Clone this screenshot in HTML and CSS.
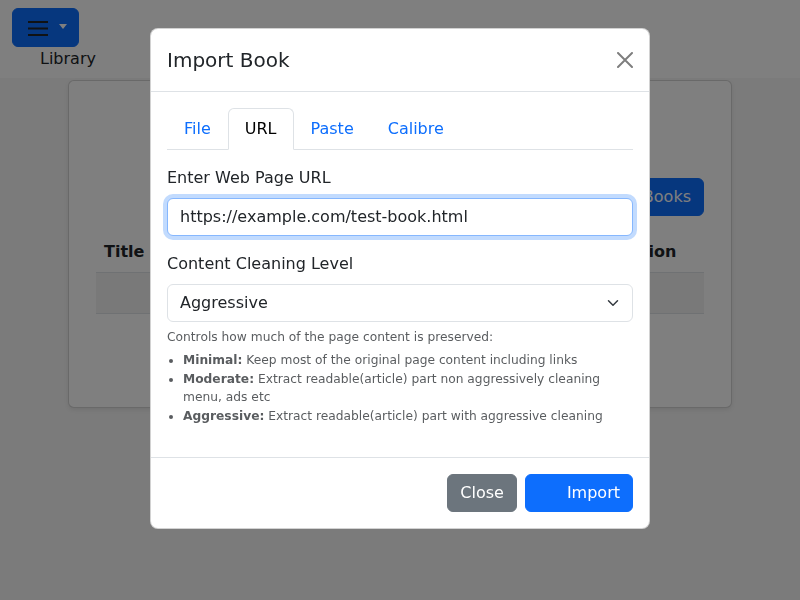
FILE: index.html
```html
<!DOCTYPE html>
<html lang="en">
<head>
<meta charset="utf-8">
<title>Library</title>
<link rel="stylesheet" href="styles.css">
</head>
<body>
<header class="topbar">
  <button class="menu-btn" type="button" aria-label="Menu">
    <svg class="burger" width="20" height="16" viewBox="0 0 20 16" aria-hidden="true">
      <path d="M0 2h20M0 8.5h20M0 15h20" stroke="#212529" stroke-width="2" fill="none"/>
    </svg>
    <span class="caret"></span>
  </button>
  <div class="brand">Library</div>
</header>

<main class="page">
  <section class="card">
    <h3 class="card-title">My Library</h3>
    <div class="toolbar">
      <button class="btn btn-primary" type="button">Import Books</button>
    </div>
    <table class="table">
      <thead>
        <tr><th class="col-title">Title</th><th>Author</th><th>Progress</th><th class="col-action">Action</th></tr>
      </thead>
      <tbody>
        <tr class="striped"><td colspan="4" class="empty">&nbsp;</td></tr>
      </tbody>
    </table>
  </section>
</main>

<div class="backdrop"></div>

<div class="modal">
  <div class="dialog">
    <div class="content">
      <div class="modal-header">
        <h5 class="modal-title">Import Book</h5>
        <button class="btn-close" type="button" aria-label="Close">
          <svg width="16" height="16" viewBox="0 0 16 16" aria-hidden="true">
            <path d="M1 1L15 15M15 1L1 15" stroke="#000" stroke-width="2" stroke-linecap="round" fill="none"/>
          </svg>
        </button>
      </div>
      <div class="modal-body">
        <ul class="nav-tabs">
          <li><a class="nav-link" href="#">File</a></li>
          <li><a class="nav-link active" href="#">URL</a></li>
          <li><a class="nav-link" href="#">Paste</a></li>
          <li><a class="nav-link" href="#">Calibre</a></li>
        </ul>
        <div class="tab-content">
          <div class="group">
            <label class="form-label" for="url">Enter Web Page URL</label>
            <input class="form-control focused" id="url" type="text" value="https://example.com/test-book.html">
          </div>
          <div class="group-last">
            <label class="form-label" for="lvl">Content Cleaning Level</label>
            <div class="select-wrap">
              <select class="form-select" id="lvl">
                <option>Minimal</option>
                <option>Moderate</option>
                <option selected>Aggressive</option>
              </select>
              <svg class="chevron" width="16" height="12" viewBox="0 0 16 16" aria-hidden="true">
                <path d="M2 5l6 6 6-6" stroke="#343a40" stroke-width="2" stroke-linecap="round" stroke-linejoin="round" fill="none"/>
              </svg>
            </div>
            <div class="form-text">
              <p class="hint">Controls how much of the page content is preserved:</p>
              <ul class="levels">
                <li><strong>Minimal:</strong> Keep most of the original page content including links</li>
                <li><strong>Moderate:</strong> Extract readable(article) part non aggressively cleaning menu, ads etc</li>
                <li><strong>Aggressive:</strong> Extract readable(article) part with aggressive cleaning</li>
              </ul>
            </div>
          </div>
        </div>
      </div>
      <div class="modal-footer">
        <button class="btn btn-secondary" type="button">Close</button>
        <button class="btn btn-primary btn-import" type="button"><span class="btn-icon"></span>Import</button>
      </div>
    </div>
  </div>
</div>
</body>
</html>
```

FILE: styles.css
```css
* { box-sizing: border-box; }

html, body {
  margin: 0;
  padding: 0;
}

body {
  font-family: "DejaVu Sans", sans-serif;
  font-size: 16px;
  line-height: 1.5;
  color: #212529;
  background: #f6f6f6;
  height: 600px;
  overflow: hidden;
}

.topbar {
  background: #fff;
  height: 78px;
  padding: 8px 12px 0;
}

.menu-btn {
  display: flex;
  align-items: center;
  width: 67px;
  height: 39px;
  padding: 0 0 0 15px;
  background: #0d6efd;
  border: 1px solid #0d6efd;
  border-radius: 6px;
}

.burger { display: block; }

.caret {
  display: inline-block;
  margin-left: 11px;
  margin-top: -2px;
  border-top: 5px solid #fff;
  border-left: 4px solid transparent;
  border-right: 4px solid transparent;
}

.brand {
  margin-left: 28px;
  line-height: 24px;
}

.page {
  padding: 2px 68px 0;
}

.card {
  background: #fff;
  border: 1px solid rgba(0, 0, 0, 0.175);
  border-radius: 6px;
  box-shadow: 0 2px 4px rgba(0, 0, 0, 0.08);
  padding: 28px 27px 28px;
  height: 328px;
}

.card-title {
  margin: 0 0 35px;
  font-size: 28px;
  line-height: 34px;
  font-weight: 500;
  text-align: center;
}

.toolbar {
  display: flex;
  justify-content: flex-end;
  margin-bottom: 16px;
}

.btn {
  font-family: inherit;
  font-size: 16px;
  line-height: 24px;
  padding: 6px 12px;
  border: 1px solid transparent;
  border-radius: 6px;
  color: #fff;
}

.btn-primary {
  background: #0d6efd;
  border-color: #0d6efd;
}

.btn-secondary {
  background: #6c757d;
  border-color: #6c757d;
}

.table {
  width: 100%;
  border-collapse: collapse;
  table-layout: fixed;
}

.table th,
.table td {
  padding: 8px;
  text-align: left;
  border-bottom: 1px solid #dee2e6;
}

.table th { font-weight: 700; }

.col-title { width: 200px; }
.col-action { width: 93px; }

.striped td { background: rgba(0, 0, 0, 0.05); }

.backdrop {
  position: fixed;
  inset: 0;
  background: rgba(0, 0, 0, 0.5);
}

.modal {
  position: fixed;
  inset: 0;
}

.dialog {
  width: 500px;
  margin: 28px auto;
}

.content {
  background: #fff;
  border: 1px solid rgba(0, 0, 0, 0.175);
  border-radius: 8px;
}

.modal-header {
  display: flex;
  align-items: center;
  justify-content: space-between;
  padding: 16px;
  border-bottom: 1px solid #dee2e6;
}

.modal-title {
  margin: 0;
  font-size: 20px;
  line-height: 30px;
  font-weight: 400;
}

.btn-close {
  display: flex;
  padding: 0;
  border: 0;
  background: none;
  opacity: 0.5;
}

.modal-body {
  padding: 16px;
}

.nav-tabs {
  display: flex;
  list-style: none;
  margin: 0;
  padding: 0;
  border-bottom: 1px solid #dee2e6;
}

.nav-link {
  display: block;
  padding: 8px 16px;
  margin-bottom: -1px;
  border: 1px solid transparent;
  border-radius: 6px 6px 0 0;
  color: #0d6efd;
  text-decoration: none;
}

.nav-link.active {
  color: #000;
  background: #fff;
  border-color: #dee2e6 #dee2e6 #fff;
}

.tab-content {
  margin-top: 16px;
}

.group { margin-bottom: 16px; }

.form-label {
  display: block;
  margin-bottom: 8px;
}

.form-control,
.form-select {
  display: block;
  width: 100%;
  font-family: inherit;
  font-size: 16px;
  line-height: 24px;
  padding: 6px 12px;
  color: #212529;
  background: #fff;
  border: 1px solid #dee2e6;
  border-radius: 6px;
  outline: none;
}

.form-control.focused {
  border-color: #86b7fe;
  box-shadow: 0 0 0 4px rgba(13, 110, 253, 0.25);
}

.select-wrap { position: relative; }

.form-select {
  appearance: none;
  -webkit-appearance: none;
  padding-right: 36px;
}

.chevron {
  position: absolute;
  right: 12px;
  top: 13px;
}

.form-text {
  margin-top: 6px;
  font-size: 12.25px;
  line-height: 1.5;
  color: rgba(33, 37, 41, 0.75);
}

.hint {
  margin: 0 0 5px;
}

.levels {
  margin: 0 0 16px;
  padding-left: 16px;
}

.levels strong { font-weight: 700; }

.modal-footer {
  display: flex;
  justify-content: flex-end;
  align-items: center;
  padding: 12px;
  border-top: 1px solid #dee2e6;
}

.modal-footer .btn { margin: 4px; }

.btn-icon {
  display: inline-block;
  width: 29px;
}
```
